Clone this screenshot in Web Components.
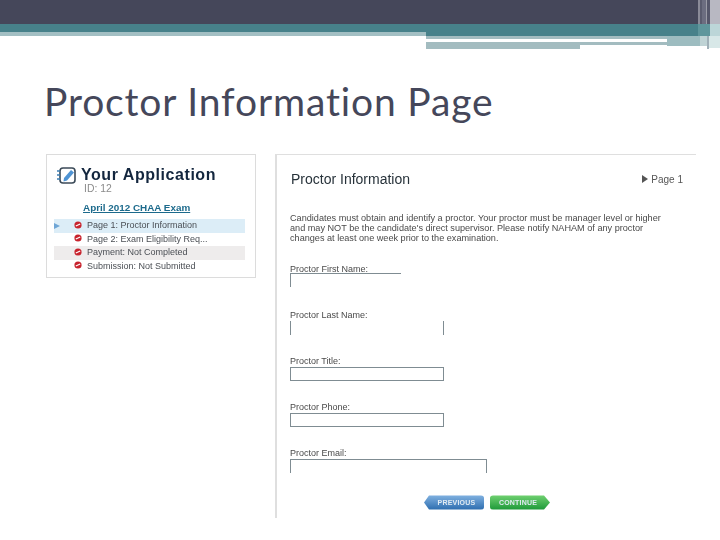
<!DOCTYPE html>
<html><head><meta charset="utf-8"><style>
html,body{margin:0;padding:0;background:#fff}
body{width:720px;height:540px;overflow:hidden;font-family:"Liberation Sans",Arial,sans-serif}
</style></head><body>
<slide-page></slide-page>
<script>
function el(name, css, html){
  customElements.define(name, class extends HTMLElement{
    connectedCallback(){
      if(this.shadowRoot) return;
      const s=this.attachShadow({mode:'open'});
      s.innerHTML='<style>'+css+'</style>'+(typeof html==='function'?html(this):html);
    }
  });
}
el('slide-header',`
:host{display:block;position:relative;height:49px}
.dark{height:24px;background:#45475a}
.teal{height:8px;background:#47818a}
.split{display:flex;height:17px}
.left{width:426px}
.left i{display:block;height:4px;background:#a3bfc3}
.right{flex:1;display:flex;flex-direction:column}
.t{height:4px;background:#47818a}
.l{height:3px;background:#a3bcc0}
.w{height:3px;margin-right:53px;background:#fff}
.g{height:3px;background:#a3bcc0;margin-right:53px}
.g2{height:4px;width:154px;background:#a3bcc0}
.rb{position:absolute;left:667px;top:36px;width:33px;height:10px;background:#9dbcc0}
.s{position:absolute;top:0;bottom:0}
`,`<div class="dark"></div><div class="teal"></div>
<div class="split"><div class="left"><i></i></div><div class="right"><div class="t"></div><div class="l"></div><div class="w"></div><div class="g"></div><div class="g2"></div></div></div>
<div class="rb"></div>
<div class="s" style="left:698px;width:2px;height:24px;background:#8a8b98"></div>
<div class="s" style="left:700px;width:2px;height:24px;background:#5a5b6e"></div>
<div class="s" style="left:702px;width:4px;height:24px;background:#6c6d80"></div>
<div class="s" style="left:706px;width:1px;height:24px;background:#9a9ba6"></div>
<div class="s" style="left:707px;width:3px;height:24px;background:#55566a"></div>
<div class="s" style="left:710px;width:10px;height:24px;background:#b8b8c2"></div>
<div class="s" style="left:698px;top:24px;width:12px;height:12px;background:#5f969c"></div>
<div class="s" style="left:710px;top:24px;width:10px;height:12px;background:#bcd6d8"></div>
<div class="s" style="left:700px;top:36px;width:7px;height:10px;background:#bfd3d5"></div>
<div class="s" style="left:707px;top:36px;width:2px;height:13px;background:#a0b0b8"></div>
<div class="s" style="left:709px;top:36px;width:11px;height:12px;background:#d8e8e8"></div>`);

el('proctor-field',`
:host{display:block;height:46px}
.lab{font:400 9px/13px "Liberation Sans",Arial,sans-serif;color:#4a4a4a;height:10px;white-space:nowrap;filter:blur(.4px)}
.box{box-sizing:border-box;border:0 solid #7f8c92}
`,h=>{
  const w=h.getAttribute('w'),b=h.getAttribute('b')||'1 1 1 1',p=b.split(' ').map(x=>x+'px').join(' '),mt=h.getAttribute('mt')||'0';
  return `<div class="lab">${h.getAttribute('label')}</div><div class="box" style="width:${w}px;border-width:${p};height:14px;margin-top:${mt}px"></div>`;
});

el('nav-button',`
:host{display:block;width:60px;height:15px;position:relative}
svg{position:absolute;inset:0}
span{position:absolute;inset:0;text-align:center;font:700 7px/15px "Liberation Sans",Arial,sans-serif;color:#dfeaf2;letter-spacing:.2px;filter:blur(.35px)}
`,h=>{
  const prev=h.getAttribute('kind')==='prev';
  const a=prev?'#7fb0e0':'#6fd070',c=prev?'#2f6fb0':'#1f9a3a',id=prev?'p':'c';
  const path=prev?'M0 7.5 5 .5H57Q60 .5 60 3V12Q60 14.5 57 14.5H5Z':'M0 3Q0 .5 3 .5H54L60 7.5 54 14.5H3Q0 14.5 0 12Z';
  return `<svg width="60" height="15" viewBox="0 0 60 15"><defs><linearGradient id="${id}" x1="0" y1="0" x2="0" y2="1"><stop offset="0" stop-color="${a}"/><stop offset="1" stop-color="${c}"/></linearGradient></defs><path d="${path}" fill="url(#${id})"/></svg><span style="${prev?'padding-left:5px':'padding-right:4px'}"><slot></slot></span>`;
});

el('status-row',`
:host{display:flex;align-items:center;height:13.5px;position:relative;font:400 9px/13px "Liberation Sans",Arial,sans-serif;color:#4b4f55;white-space:nowrap}
:host([tone=blue]){background:#dcedf7}
:host([tone=gray]){background:#eeecec}
.mark{position:absolute;left:20px;top:1.5px;width:8px;height:8px}
.t{margin-left:33px;filter:blur(.35px)}
.ar{position:absolute;left:0;top:4px;width:0;height:0;border-left:6px solid #6fa6d6;border-top:3px solid transparent;border-bottom:3px solid transparent}
`,h=>`${h.hasAttribute('current')?'<i class="ar"></i>':''}<svg class="mark" viewBox="0 0 8 8"><circle cx="4" cy="4" r="3.6" fill="#c8242e"/><path d="M1.8 5 6.2 3" stroke="#fff" stroke-width="1.2"/></svg><span class="t"><slot></slot></span>`);

el('application-card',`
:host{display:block;box-sizing:border-box;width:210px;height:124px;border:1px solid #dcdcdc;padding:10px 10px 0 7px}
.head{display:flex;align-items:flex-start;gap:5px;padding-left:2px}
svg{width:20px;height:19px;flex:none;margin-top:1px}
h2{margin:0;font:700 16px/20px "Liberation Sans",Arial,sans-serif;color:#13263e;letter-spacing:.55px;white-space:nowrap;filter:blur(.3px)}
.id{margin:0 0 0 30px;font:400 10.4px/11px "Liberation Sans",Arial,sans-serif;color:#8b8b8b;filter:blur(.35px);margin-top:-2px}
a{display:block;margin:8px 0 6px 29px;font:700 9.9px/11px "Liberation Sans",Arial,sans-serif;color:#1c6a8c;text-decoration:underline;white-space:nowrap;filter:blur(.35px)}
.rows{display:block;width:191px}
`,`<div class="head"><svg viewBox="0 0 20 19"><rect x="4" y="2" width="15" height="15" rx="3" fill="#fff" stroke="#3b4a58" stroke-width="1.6"/><path d="M1 5h3M1 9h3M1 13h3" stroke="#3d7fb5" stroke-width="1.5"/><path d="M8 12 15 4l3 2.5-7 8-3.5 1z" fill="#4f94d4"/></svg><h2>Your Application</h2></div>
<p class="id">ID: 12</p><a>April 2012 CHAA Exam</a>
<div class="rows"><slot></slot></div>`);

el('proctor-form',`
:host{display:block;box-sizing:border-box;width:421px;height:364px;border:solid #dfdfdf;border-width:1px 0 0 2px;padding:17px 13px 0 13px;position:relative}
.top{display:flex;justify-content:space-between;align-items:center;height:15px;padding-left:1px}
h2{margin:0;font:400 14px/15px "Liberation Sans",Arial,sans-serif;color:#27323a;white-space:nowrap;filter:blur(.35px)}
.pg{display:flex;align-items:center;gap:3px;font:400 10px/12px "Liberation Sans",Arial,sans-serif;color:#555;filter:blur(.35px)}
.pg i{border-left:6px solid #555;border-top:4px solid transparent;border-bottom:4px solid transparent;margin-top:-2px}
p{margin:26px 0 0 0;width:385px;font:400 9.15px/10px "Liberation Sans",Arial,sans-serif;color:#4a4a4a;filter:blur(.4px);white-space:nowrap}
.fields{margin-top:20px}
.btns{display:flex;gap:6px;margin:2px 0 0 134px}
`,`<div class="top"><h2>Proctor Information</h2><div class="pg"><i></i>Page 1</div></div>
<p>Candidates must obtain and identify a proctor. Your proctor must be manager level or higher<br>and may NOT be the candidate's direct supervisor. Please notify NAHAM of any proctor<br>changes at least one week prior to the examination.</p>
<div class="fields"><slot></slot></div>
<div class="btns"><slot name="buttons"></slot></div>`);

el('slide-page',`
:host{display:block;width:720px;height:540px;background:#fff}
h1{margin:27px 0 0 44px;font:400 39px/50px "Lato","Open Sans",sans-serif;color:#45475a;letter-spacing:.85px;white-space:nowrap;height:54px}
.row{display:flex;align-items:flex-start;gap:19px;margin:24px 0 0 46px}
`,`<slide-header></slide-header><h1>Proctor Information Page</h1>
<div class="row"><application-card>
<status-row tone="blue" current>Page 1: Proctor Information</status-row>
<status-row>Page 2: Exam Eligibility Req...</status-row>
<status-row tone="gray">Payment: Not Completed</status-row>
<status-row>Submission: Not Submitted</status-row>
</application-card>
<proctor-form>
<proctor-field label="Proctor First Name:" w="111" b="1 0 0 1"></proctor-field>
<proctor-field label="Proctor Last Name:" w="154" b="0 1 0 1" mt="2"></proctor-field>
<proctor-field label="Proctor Title:" w="154" mt="2"></proctor-field>
<proctor-field label="Proctor Phone:" w="154" mt="2"></proctor-field>
<proctor-field label="Proctor Email:" w="197" b="1 1 0 1" mt="2"></proctor-field>
<nav-button slot="buttons" kind="prev">PREVIOUS</nav-button>
<nav-button slot="buttons" kind="next">CONTINUE</nav-button>
</proctor-form></div>`);
</script>
</body></html>
